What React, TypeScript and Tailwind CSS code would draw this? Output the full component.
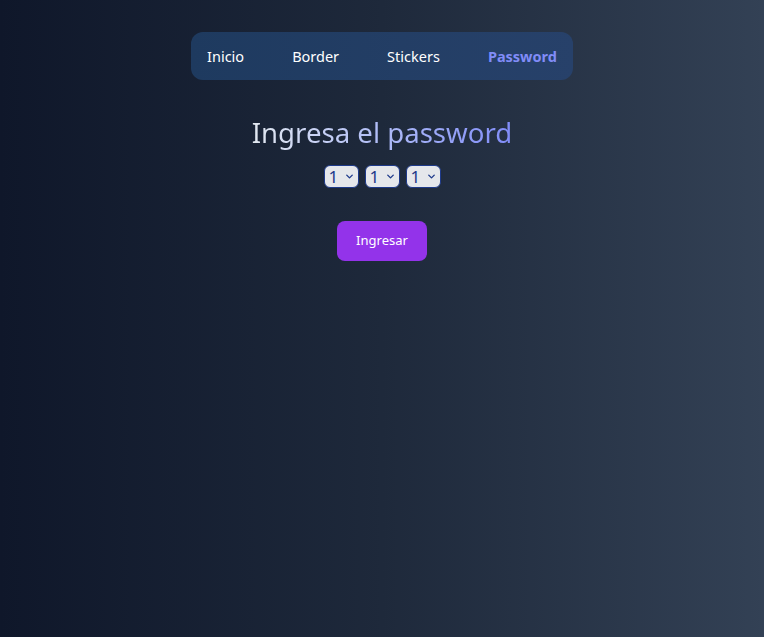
import { ChevronDown } from "lucide-react";

const links = ["Inicio", "Border", "Stickers", "Password"];

function Pick() {
  return (
    <div className="relative">
      <select
        defaultValue="1"
        className="appearance-none w-[35px] h-[23px] pl-[4px] pr-4 rounded-md border border-[#1e3a8a] bg-[#e5e7eb] text-[#1e3a8a] text-[17px] leading-none outline-none"
      >
        {[1, 2, 3, 4, 5, 6, 7, 8, 9].map((n) => (
          <option key={n} value={n}>
            {n}
          </option>
        ))}
      </select>
      <ChevronDown className="absolute right-[4px] top-[6px] w-[11px] h-[11px] text-[#1e3a8a] pointer-events-none" strokeWidth={3} />
    </div>
  );
}

export default function App() {
  return (
    <div
      className="min-h-screen w-full bg-gradient-to-r from-[#0f172a] via-[#1e293b] to-[#334155] flex flex-col items-center pt-8"
      style={{ fontFamily: '"Noto Sans", "Open Sans", sans-serif' }}
    >
      <nav className="flex gap-12 px-4 py-3 rounded-xl bg-gradient-to-r from-[#1e3a5f] to-[#27416a]">
        {links.map((l) => (
          <a
            key={l}
            href="#"
            className={
              l === "Password"
                ? "text-[14.5px] leading-6 font-bold text-[#818cf8]"
                : "text-[14.5px] leading-6 text-white"
            }
          >
            {l}
          </a>
        ))}
      </nav>

      <h1 className="mt-[34px] text-[27.6px] leading-9 bg-gradient-to-r from-[#e2e8f0] to-[#818cf8] bg-clip-text text-transparent">
        Ingresa el password
      </h1>

      <div className="mt-[15px] flex gap-[6px]">
        <Pick />
        <Pick />
        <Pick />
      </div>

      <button className="mt-[32px] w-[90px] h-10 rounded-lg bg-[#9333ea] text-white text-[13px]">
        Ingresar
      </button>
    </div>
  );
}
